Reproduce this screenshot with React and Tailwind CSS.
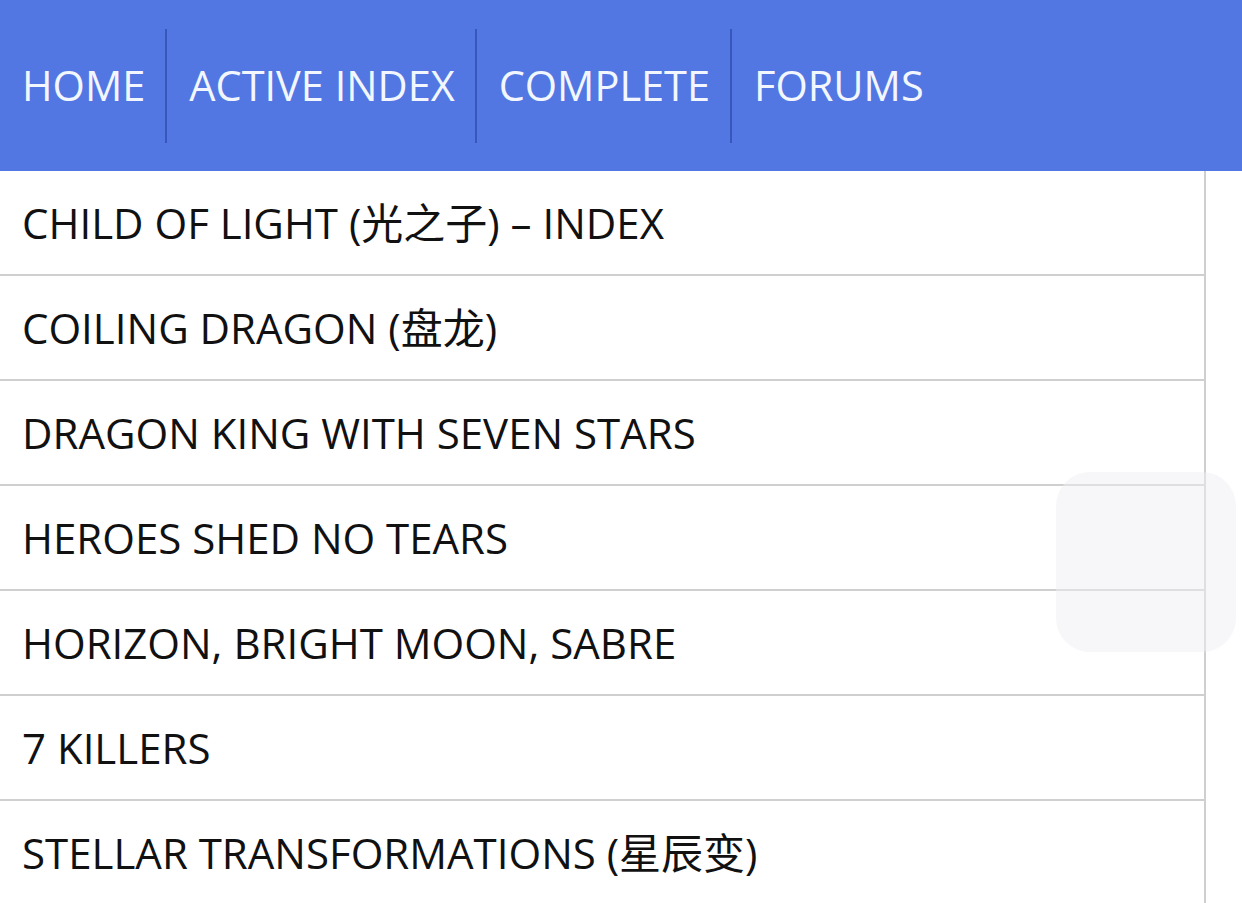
const nav = ['HOME', 'ACTIVE INDEX', 'COMPLETE', 'FORUMS']

const items = [
  'CHILD OF LIGHT (光之子) – INDEX',
  'COILING DRAGON (盘龙)',
  'DRAGON KING WITH SEVEN STARS',
  'HEROES SHED NO TEARS',
  'HORIZON, BRIGHT MOON, SABRE',
  '7 KILLERS',
  'STELLAR TRANSFORMATIONS (星辰变)',
]

export default function App() {
  return (
    <div
      className="relative h-[903px] w-[1242px] overflow-hidden bg-white"
      style={{ fontFamily: '"Open Sans", "Noto Sans CJK SC", sans-serif' }}
    >
      <nav className="flex h-[171px] items-center bg-[#5277e3] pl-[22px]">
        {nav.map((n, i) => (
          <div key={n} className="flex h-[114px] items-center">
            {i > 0 && <div className="h-full w-[2px] bg-[#3857bb]" />}
            <span className={`text-[41.5px] leading-none text-[#f2f7ff] ${i > 0 ? 'pl-[22px]' : ''} pr-[20px]`}>
              {n}
            </span>
          </div>
        ))}
      </nav>

      <ul className="w-[1206px] border-r-2 border-[#cfcfcf]">
        {items.map((t) => (
          <li
            key={t}
            className="flex h-[105px] items-center border-b-2 border-[#cfcfcf] pl-[22px] text-[42px] leading-none text-[#111]"
          >
            {t}
          </li>
        ))}
      </ul>

      <div className="absolute left-[1056px] top-[472px] h-[180px] w-[180px] rounded-[34px] bg-[#efedf2]/50" />
    </div>
  )
}
